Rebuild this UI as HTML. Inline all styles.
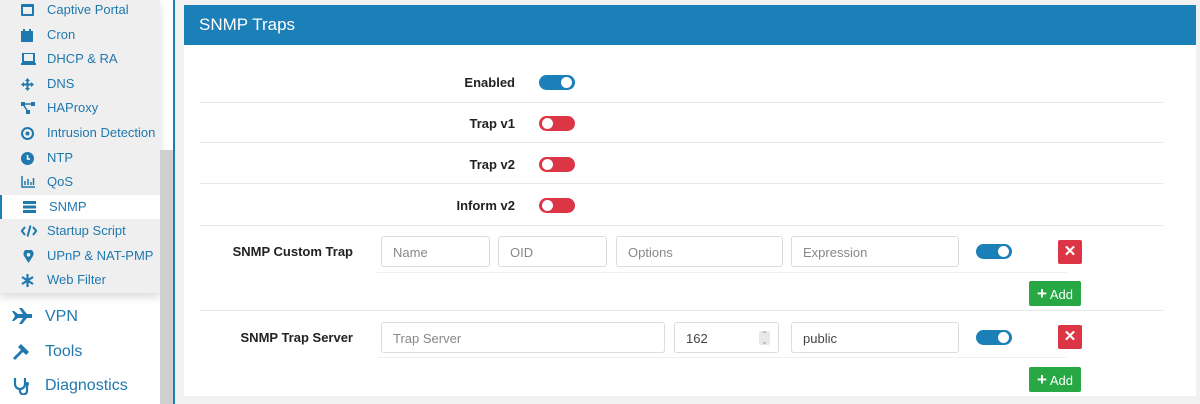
<!DOCTYPE html>
<html><head><meta charset="utf-8"><style>
*{box-sizing:border-box;margin:0;padding:0}
body{width:1200px;height:404px;overflow:hidden;background:#f1f1f1;font-family:"Liberation Sans",sans-serif;position:relative}
.side{position:absolute;left:0;top:0;width:173px;height:404px;background:#fff}
.scroll{position:absolute;left:160px;top:150px;width:13px;height:254px;background:#cfcfcf}
.vline{position:absolute;left:173px;top:0;width:2px;height:404px;background:#1b7fb8}
.sub{position:absolute;left:0;top:0;width:160px;height:293px;background:#efefef;box-shadow:0 4px 8px rgba(0,0,0,.15)}
.it{position:absolute;left:0;width:160px;height:24px;line-height:24px;font-size:13px;color:#1f78ae;padding-left:47px}
.it svg{position:absolute;left:21px;top:6px}
.it.act{background:#fff;border-left:2px solid #1b7fb8;padding-left:47px}
.big{position:absolute;left:45px;font-size:16px;color:#1f78ae}
.panel{position:absolute;left:184px;top:5px;width:1012px;height:391px;background:#fff}
.hd{height:40px;background:#1b7fb8;color:#fff;font-size:17px;padding:10px 0 0 15px}
.lbl{position:absolute;font-size:13px;font-weight:bold;color:#222;text-align:right}
.sep{position:absolute;left:200px;width:963px;height:1px;background:#e8e8e8}
.tg{position:absolute;width:36px;height:15px;border-radius:8px}
.tg::after{content:"";position:absolute;top:2px;width:11px;height:11px;border-radius:50%;background:#fff}
.on{background:#1b7fb8}.on::after{right:3px}
.off{background:#dc3545}.off::after{left:3px}
.in{position:absolute;height:31px;border:1px solid #dcdcdc;border-radius:3px;font-size:13px;color:#888;padding:8px 0 0 11px}
.x{position:absolute;width:24px;height:24px;background:#dc3545;border-radius:2px;color:#fff;font-weight:bold;font-size:15px;text-align:center;line-height:24px}
.add{position:absolute;width:52px;height:25px;background:#28a745;border-radius:2px;color:#fff;font-size:13px;line-height:25px;text-align:center}
.add b{font-size:17px}
</style></head><body>
<div class="side">
<div class="sub">
<div class="it" style="top:-2px"><svg width="13" height="12"><rect x="0" y="0" width="13" height="12" rx="1" fill="#1f78ae"/><rect x="2" y="3" width="9" height="7" fill="#efefef"/></svg>Captive Portal</div>
<div class="it" style="top:23px"><svg width="12" height="13"><rect x="0" y="2" width="12" height="11" fill="#1f78ae"/><rect x="2" y="0" width="2" height="3" fill="#1f78ae"/><rect x="8" y="0" width="2" height="3" fill="#1f78ae"/></svg>Cron</div>
<div class="it" style="top:47px"><svg width="15" height="12"><rect x="2" y="0" width="11" height="9" fill="none" stroke="#1f78ae" stroke-width="2"/><rect x="0" y="10" width="15" height="2" fill="#1f78ae"/></svg>DHCP &amp; RA</div>
<div class="it" style="top:72px"><svg width="13" height="13"><path d="M6.5 0L9 3H4zM6.5 13L9 10H4zM0 6.5L3 4V9zM13 6.5L10 4V9z" fill="#1f78ae"/><rect x="5.5" y="2" width="2" height="9" fill="#1f78ae"/><rect x="2" y="5.5" width="9" height="2" fill="#1f78ae"/></svg>DNS</div>
<div class="it" style="top:96px"><svg width="14" height="12"><rect x="0" y="0" width="4" height="4" fill="#1f78ae"/><rect x="10" y="0" width="4" height="4" fill="#1f78ae"/><rect x="5" y="8" width="4" height="4" fill="#1f78ae"/><path d="M2 2H12M2 2L7 10" stroke="#1f78ae" stroke-width="1.5"/></svg>HAProxy</div>
<div class="it" style="top:121px"><svg width="13" height="13"><circle cx="6.5" cy="6.5" r="5.5" fill="none" stroke="#1f78ae" stroke-width="2"/><circle cx="6.5" cy="6.5" r="2" fill="#1f78ae"/></svg>Intrusion Detection</div>
<div class="it" style="top:146px"><svg width="13" height="13"><circle cx="6.5" cy="6.5" r="6.5" fill="#1f78ae"/><path d="M6.5 3V7H9" stroke="#fff" stroke-width="1.5" fill="none"/></svg>NTP</div>
<div class="it" style="top:170px"><svg width="14" height="12"><path d="M1 0V11H14" stroke="#1f78ae" stroke-width="1.5" fill="none"/><path d="M4 9V5M7 9V3M10 9V6M12.5 9V2" stroke="#1f78ae" stroke-width="1.5"/></svg>QoS</div>
<div class="it act" style="top:195px"><svg width="13" height="12" style="left:21px"><rect y="0" width="13" height="3" fill="#1f78ae"/><rect y="4.5" width="13" height="3" fill="#1f78ae"/><rect y="9" width="13" height="3" fill="#1f78ae"/></svg>SNMP</div>
<div class="it" style="top:219px"><svg width="16" height="12"><path d="M4 2L0.8 6L4 10M12 2L15.2 6L12 10M9.5 0.5L6.5 11.5" stroke="#1f78ae" stroke-width="2" fill="none"/></svg>Startup Script</div>
<div class="it" style="top:244px"><svg width="11" height="13" style="left:23px"><path d="M5.5 13L1 6A5 5 0 1 1 10 6Z" fill="#1f78ae"/><circle cx="5.5" cy="4.8" r="1.8" fill="#efefef"/></svg>UPnP &amp; NAT-PMP</div>
<div class="it" style="top:268px"><svg width="13" height="13"><path d="M6.5 0V13M1 3L12 10M12 3L1 10" stroke="#1f78ae" stroke-width="2.2"/></svg>Web Filter</div>
</div>
<svg style="position:absolute;left:12px;top:308px" width="20" height="16"><path d="M0 3L3 8L0 13H2L6 10H11L7 16H10L15 10H19A2 2 0 0 0 19 6H15L10 0H7L11 6H6L2 3Z" fill="#1f78ae"/></svg>
<div class="big" style="top:308px">VPN</div>
<svg style="position:absolute;left:13px;top:343px" width="17" height="17"><path d="M8 1L16 9L13 12L10 9L2 17L0 15L8 7L5 4Z" fill="#1f78ae"/></svg>
<div class="big" style="top:343px">Tools</div>
<svg style="position:absolute;left:13px;top:377px" width="17" height="18"><path d="M2 1V7A5 5 0 0 0 12 7V1M7 12V14A3 3 0 0 0 14 14V9" stroke="#1f78ae" stroke-width="2.2" fill="none"/><circle cx="14" cy="7" r="2" fill="#1f78ae"/></svg>
<div class="big" style="top:377px">Diagnostics</div>
<div class="scroll"></div>
</div>
<div class="vline"></div>
<div class="panel"><div class="hd">SNMP Traps</div></div>

<div class="lbl" style="right:685px;top:75px">Enabled</div><div class="tg on" style="left:539px;top:75px"></div>
<div class="sep" style="top:102px"></div>
<div class="lbl" style="right:685px;top:116px">Trap v1</div><div class="tg off" style="left:539px;top:116px"></div>
<div class="sep" style="top:142px"></div>
<div class="lbl" style="right:685px;top:157px">Trap v2</div><div class="tg off" style="left:539px;top:157px"></div>
<div class="sep" style="top:183px"></div>
<div class="lbl" style="right:685px;top:198px">Inform v2</div><div class="tg off" style="left:539px;top:198px"></div>
<div class="sep" style="top:225px"></div>

<div class="lbl" style="right:847px;top:244px">SNMP Custom Trap</div>
<div class="in" style="left:381px;top:236px;width:109px">Name</div>
<div class="in" style="left:498px;top:236px;width:109px">OID</div>
<div class="in" style="left:616px;top:236px;width:167px">Options</div>
<div class="in" style="left:791px;top:236px;width:168px">Expression</div>
<div class="tg on" style="left:976px;top:244px"></div>
<div class="x" style="left:1058px;top:240px">✕</div>
<div class="sep" style="left:377px;width:690px;top:272px;background:#f0f0f0"></div>
<div class="add" style="left:1029px;top:281px"><b>+</b> Add</div>
<div class="sep" style="top:310px"></div>

<div class="lbl" style="right:847px;top:330px">SNMP Trap Server</div>
<div class="in" style="left:381px;top:322px;width:284px">Trap Server</div>
<div class="in" style="left:674px;top:322px;width:105px;color:#444">162<span style="position:absolute;right:8px;top:8px;width:11px;height:14px;background:#e8e8e8;border-radius:2px;font-size:8px;color:#999;text-align:center;line-height:7px">⌃<br>⌄</span></div>
<div class="in" style="left:791px;top:322px;width:168px;color:#444">public</div>
<div class="tg on" style="left:976px;top:330px"></div>
<div class="x" style="left:1058px;top:325px">✕</div>
<div class="sep" style="left:377px;width:690px;top:357px;background:#f0f0f0"></div>
<div class="add" style="left:1029px;top:367px"><b>+</b> Add</div>
</body></html>
